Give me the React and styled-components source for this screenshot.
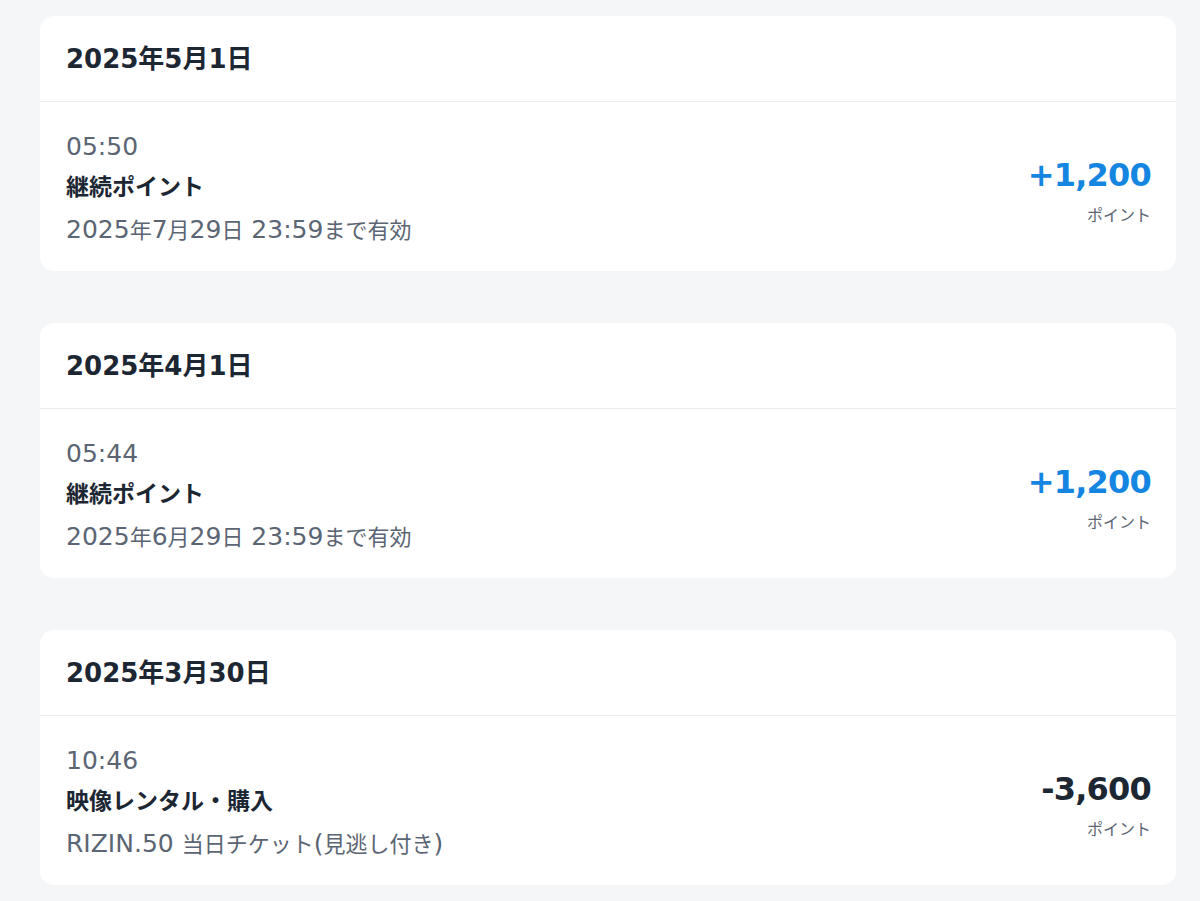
import React from "react";
import styled, { createGlobalStyle } from "styled-components";

const Global = createGlobalStyle`
  html, body { margin: 0; padding: 0; background: #f5f6f8; }
  body { font-family: "DejaVu Sans", "Noto Sans CJK JP", sans-serif; color: #1d2733; }
`;

const Page = styled.main`
  display: flex;
  flex-direction: column;
  gap: 52px;
  padding: 16px 24px 16px 40px;
`;

const Card = styled.section`
  background: #ffffff;
  border-radius: 14px;
  overflow: hidden;
`;

const CardHeader = styled.header`
  box-sizing: border-box;
  height: 86px;
  display: flex;
  align-items: center;
  padding: 0 26px 4px;
  border-bottom: 1px solid #e9ebee;
  font-size: 26px;
  font-weight: 700;
  color: #1d2733;
`;

const Row = styled.div`
  height: 169px;
  box-sizing: border-box;
  display: flex;
  align-items: center;
  justify-content: space-between;
  padding: 0 25px 0 26px;
`;

const Info = styled.div`
  display: flex;
  flex-direction: column;
  margin-top: 3px;
`;

const Time = styled.div`
  font-size: 25px;
  line-height: 41px;
  color: #5b6573;
`;

const Title = styled.div`
  font-size: 23px;
  line-height: 41px;
  font-weight: 700;
  color: #1d2733;
`;

const Note = styled.div`
  font-size: 25px;
  line-height: 41px;
  color: #5b6573;
`;

const Kana = styled.span`
  font-family: "Noto Sans CJK JP", sans-serif;
  font-size: 0.88em;
`;

const Amount = styled.div`
  display: flex;
  flex-direction: column;
  align-items: flex-end;
  gap: 8px;
  margin-top: 6px;
`;

const Value = styled.div`
  font-size: 32px;
  line-height: 40px;
  font-weight: 700;
  letter-spacing: -0.8px;
  color: ${(p) => (p.$positive ? "#1485e0" : "#1d2733")};
`;

const Unit = styled.div`
  font-family: "Noto Sans CJK JP", sans-serif;
  font-size: 16px;
  line-height: 22px;
  color: #5b6573;
`;

const CJK = /([\u3000-\u30ff\u4e00-\u9fff\uff00-\uffef]+)/;

function Mixed({ text }) {
  return text
    .split(CJK)
    .filter(Boolean)
    .map((part, i) => (CJK.test(part) ? <Kana key={i}>{part}</Kana> : <React.Fragment key={i}>{part}</React.Fragment>));
}

const entries = [
  {
    date: "2025年5月1日",
    time: "05:50",
    title: "継続ポイント",
    note: "2025年7月29日 23:59まで有効",
    value: "+1,200",
    positive: true,
  },
  {
    date: "2025年4月1日",
    time: "05:44",
    title: "継続ポイント",
    note: "2025年6月29日 23:59まで有効",
    value: "+1,200",
    positive: true,
  },
  {
    date: "2025年3月30日",
    time: "10:46",
    title: "映像レンタル・購入",
    note: "RIZIN.50 当日チケット(見逃し付き)",
    value: "-3,600",
    positive: false,
  },
];

export default function App() {
  return (
    <>
      <Global />
      <Page>
        {entries.map((e) => (
          <Card key={e.date}>
            <CardHeader>{e.date}</CardHeader>
            <Row>
              <Info>
                <Time>{e.time}</Time>
                <Title>{e.title}</Title>
                <Note>
                  <Mixed text={e.note} />
                </Note>
              </Info>
              <Amount>
                <Value $positive={e.positive}>{e.value}</Value>
                <Unit>ポイント</Unit>
              </Amount>
            </Row>
          </Card>
        ))}
      </Page>
    </>
  );
}
